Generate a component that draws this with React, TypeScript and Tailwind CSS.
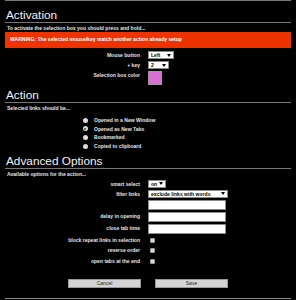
function Select({ value, className }: { value: string; className: string }) {
  return (
    <div
      className={`h-[8px] bg-white border border-[#8a8a8a] text-black flex items-center justify-between px-[2px] ${className}`}
    >
      <span className="leading-[8px] whitespace-nowrap">{value}</span>
      <svg width="4" height="3" viewBox="0 0 4 3">
        <path d="M0 0h4L2 3z" fill="#000" />
      </svg>
    </div>
  );
}

function Radio({ label, checked }: { label: string; checked?: boolean }) {
  return (
    <div className="h-[8.6px] flex items-center gap-[6.5px]">
      <span className="w-[5px] h-[5px] rounded-full bg-[#dcdcdc] flex items-center justify-center">
        {checked && <span className="w-[2px] h-[2px] rounded-full bg-[#444]" />}
      </span>
      <span className="leading-[8px]">{label}</span>
    </div>
  );
}

function Checkbox() {
  return (
    <div className="h-[8.5px] flex items-center pl-[2px]">
      <span className="w-[5px] h-[5px] rounded-[1px] bg-[#d8d8d8] border-[0.5px] border-[#999]" />
    </div>
  );
}

export default function App() {
  const label = "text-right leading-[8px] whitespace-nowrap";
  const heading =
    "text-[11.8px] leading-[14px] font-normal text-[#f2f2f2] border-b border-[#777] pl-[1px]";

  return (
    <div className="w-[296px] h-[300px] bg-black text-[#e6e6e6] font-['Liberation_Sans',Arial,sans-serif] text-[5.05px] font-bold overflow-hidden flex flex-col">
      <div className="mx-[5px] h-px bg-[#777]" />

      <div className="px-[5px] flex flex-col">
        {/* Activation */}
        <h2 className={`mt-[7px] ${heading}`}>Activation</h2>
        <p className="mt-[2px] leading-[7px] pl-[2px]">
          To activate the selection box you should press and hold...
        </p>
        <div className="h-[16px] bg-[#ee3300] flex items-center pl-[5px] text-white">
          WARNING: The selected mouse/key match another action already setup
        </div>
        <div className="mt-[3px] grid grid-cols-[135px_auto] gap-x-[8px] gap-y-[2px] items-start">
          <span className={label}>Mouse button</span>
          <Select value="Left" className="w-[26px]" />
          <span className={label}>+ key</span>
          <Select value="2" className="w-[21px]" />
          <span className={label}>Selection box color</span>
          <div className="w-[14px] h-[14px] bg-[#d96fd6] border border-[#9a9a9a]" />
        </div>

        {/* Action */}
        <h2 className={`mt-[3px] ${heading}`}>Action</h2>
        <p className="mt-[2px] leading-[7px] pl-[2px]">Selected links should be...</p>
        <div className="mt-[4px] ml-[77.5px] flex flex-col">
          <Radio label="Opened in a New Window" />
          <Radio label="Opened as New Tabs" checked />
          <Radio label="Bookmarked" />
          <Radio label="Copied to clipboard" />
        </div>

        {/* Advanced Options */}
        <h2 className={`mt-[3.5px] ${heading}`}>Advanced Options</h2>
        <p className="mt-[2px] leading-[7px] pl-[2px]">Available options for the action...</p>
        <div className="mt-[2px] grid grid-cols-[135px_auto] gap-x-[8px] gap-y-[2px] items-start">
          <span className={label}>smart select</span>
          <Select value="on" className="w-[18px]" />
          <span className={label}>filter links</span>
          <Select value="exclude links with words" className="w-[80px]" />
          <span />
          <div className="w-[78px] h-[10px] bg-white border border-[#8a8a8a]" />
          <span className={label}>delay in opening</span>
          <div className="w-[78px] h-[10px] bg-white border border-[#8a8a8a]" />
          <span className={label}>close tab time</span>
          <div className="w-[78px] h-[10px] bg-white border border-[#8a8a8a]" />
          <span className={label}>block repeat links in selection</span>
          <Checkbox />
          <span className={label}>reverse order</span>
          <Checkbox />
          <span className={label}>open tabs at the end</span>
          <Checkbox />
        </div>

        <div className="mt-[13.5px] flex justify-center gap-[14px] font-normal text-[#222]">
          <button className="w-[73px] h-[9px] bg-[#d4d4d4] border border-[#9a9a9a] leading-[7px]">
            Cancel
          </button>
          <button className="w-[73px] h-[9px] bg-[#d4d4d4] border border-[#9a9a9a] leading-[7px]">
            Save
          </button>
        </div>
      </div>

      <div className="mt-auto mb-[1px] mx-[5px] h-px bg-[#888]" />
    </div>
  );
}
